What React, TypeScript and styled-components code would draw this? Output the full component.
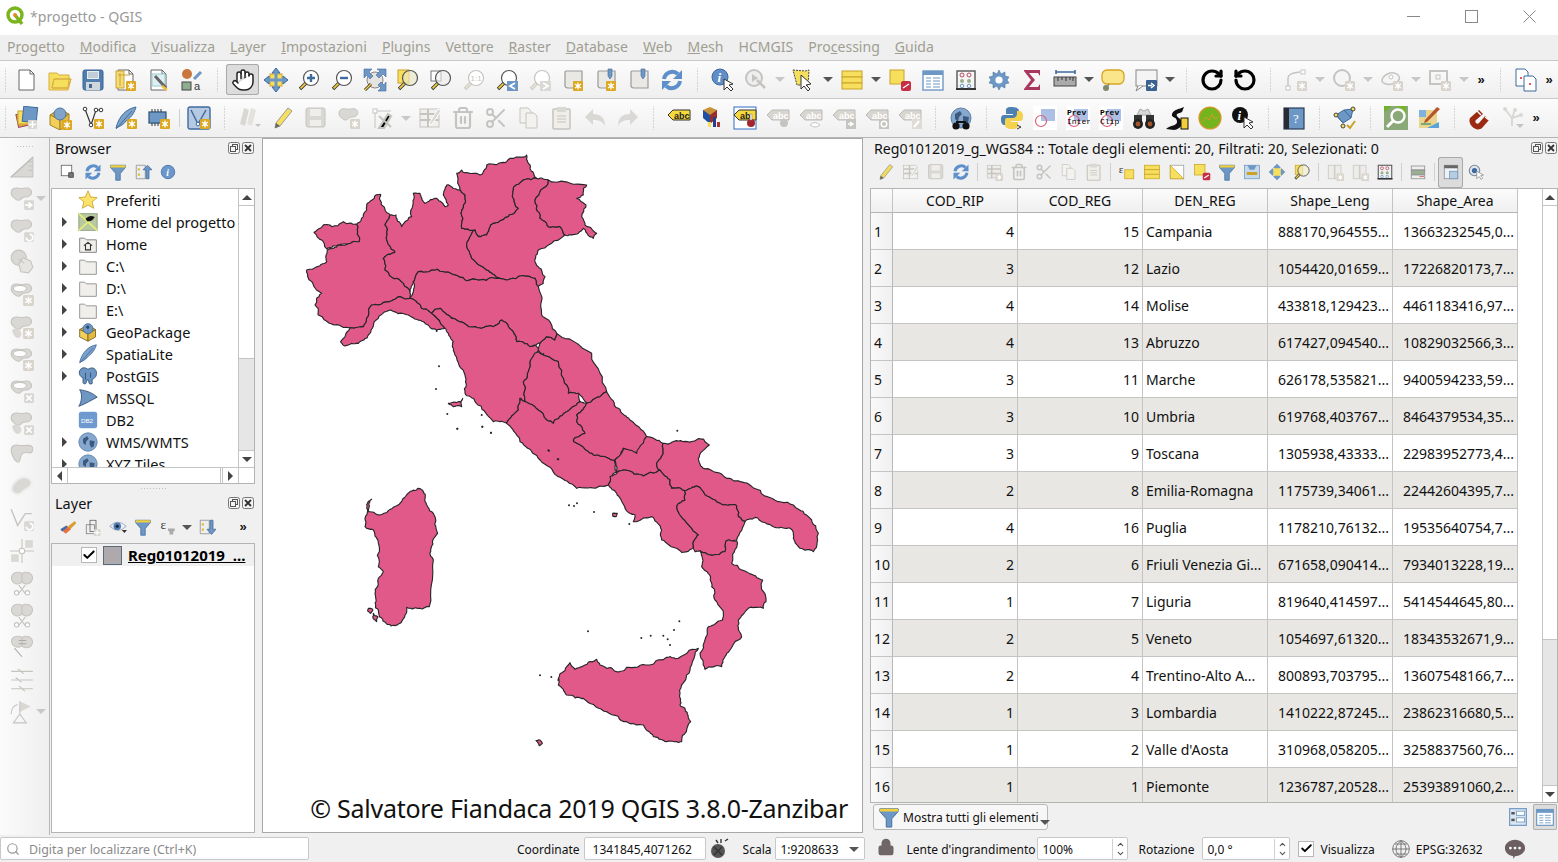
import React from "react";
import styled, { createGlobalStyle } from "styled-components";
import { Hand, RotateCcw, RotateCw, Scissors, Trash2, Search, Check, Lock, ChevronUp, ChevronDown } from "lucide-react";

const GlobalStyle = createGlobalStyle`
    html, body { margin: 0; padding: 0; height: 100%; overflow: hidden; }
    body { font-family: "Noto Sans", "Open Sans", sans-serif; font-size: 14px; color: #111; background: #f0f0f0; }
    #root { height: 100%; }
    * { box-sizing: border-box; }
`;

const B = "#6d97c4";
const BD = "#3f6a9e";
const Y = "#f7df5e";
const YD = "#c9a227";
const G = "#dad8d4";
const GD = "#c6c4c0";

const Gear = ({ x = 13, y = 13, dim = false }: { x?: number; y?: number; dim?: boolean }) => (
    <g transform={`translate(${x} ${y})`}>
        <rect width="10" height="10" rx="1" fill={dim ? "#d8d3cb" : "#dba81f"} />
        <path d="M5 1.5v7M2 3l6 4M8 3L2 7" stroke="#fff" strokeWidth="1.3" />
        <circle cx="5" cy="5" r="1.6" fill="#fff" />
    </g>
);
const Mark = ({ x = 14, y = 14, d }: { x?: number; y?: number; d: string }) => (
    <g transform={`translate(${x} ${y})`}>
        <rect width="9" height="9" rx="1" fill="#d8d6d2" />
        <path d={d} stroke="#fff" strokeWidth="1.6" fill="none" />
    </g>
);
const Lens = ({ fill = "#fff", stroke = "#555", dim = false }: { fill?: string; stroke?: string; dim?: boolean }) => (
    <>
        <path d="M9 15l-6 6" stroke={dim ? GD : "#333"} strokeWidth="3.4" />
        <path d="M8.6 15.4l-5 5" stroke={dim ? "#e8e4d0" : "#f0cc3a"} strokeWidth="1.8" />
        <circle cx="14" cy="10" r="7.5" fill={fill} stroke={stroke} strokeWidth="1.2" />
    </>
);
const Blob = ({ c = G }: { c?: string }) => (
    <path d="M2 7c0-3 3-5 7-4s6-1 9 0 4 5 1 7-5 0-7 2-3 3-6 1-4-3-4-6z" fill={c} stroke={GD} />
);
const Globe = ({ r = 10, c = 12 }: { r?: number; c?: number }) => (
    <>
        <circle cx={c} cy={c} r={r} fill="#86a8cf" stroke="#5c80aa" />
        <path d="M6 8l5-3 2 3-3 3-1 5-3-3zM14 10l6 1-1 6-3 2-2-4z" fill="#3d5a7d" />
    </>
);
const Doc = ({ c = "#666" }: { c?: string }) => (
    <>
        <path d="M4 2h11l4 4v16H4z" fill="#fff" stroke={c} />
        <path d="M15 2v4h4" fill="none" stroke={c} />
    </>
);
const Book = ({ c = "#999" }: { c?: string }) => (
    <path d="M5 3h16v17H7c-3 0-3-2-3-2V5c0-1 0-2 1-2z" fill="#e9e8e4" stroke={c} strokeWidth="1.2" />
);
const Pin = () => <path d="M14 1h4v7l-2 3-2-3z" fill={B} stroke={BD} strokeWidth=".6" />;
const LabelTag = ({ fill = "#d9d5cf", c = "#bbb", t = "abc" }: { fill?: string; c?: string; t?: string }) => (
    <>
        <path d="M1 9l5-5h17v10H6z" fill={fill} stroke={c} />
        <text x="7" y="12.5" fontSize="9" fontWeight="700" fontFamily="Liberation Sans" fill={c === "#bbb" ? "#fff" : "#222"}>{t}</text>
    </>
);
const Pencil = ({ c = Y }: { c?: string }) => (
    <>
        <path d="M17 2l4 3-12 15-5 2 1-5z" fill={c} stroke="#999" />
        <path d="M4 22l1-5 4 3z" fill="#666" />
    </>
);
const Prev = ({ a, b }: { a: string; b: string }) => (
    <>
        <rect width="24" height="24" fill="#fff" />
        <rect x="8" y="3" width="14" height="12" fill="#abc0e4" />
        <circle cx="8" cy="15" r="5.5" fill="none" stroke="#e0607a" strokeWidth="1.2" />
        <text x="1" y="9" fontSize="8" fontFamily="Liberation Mono" fontWeight="700">{a}</text>
        <text x="1" y="18" fontSize="8" fontFamily="Liberation Mono">{b}</text>
    </>
);

const icons: Record<string, React.ReactNode> = {
    new: <Doc />,
    open: <path d="M1 5h8l2 2h10v4H6l-2 9h16l1-9h2l-3 11H1z M4 20L6 11h17l-3 9z" fill={Y} stroke="#d9ae45" />,
    save: <><rect x="2" y="2" width="20" height="20" rx="2" fill="#4f7eaf" stroke="#3a6290" /><rect x="6" y="3" width="12" height="8" fill="#e9eef3" /><path d="M7 5h10M7 7h10M7 9h10" stroke="#9ab" /><rect x="5" y="14" width="14" height="8" fill="#cfd6dc" /><rect x="8" y="16" width="3" height="4" fill="#44688f" /></>,
    saveAs: <><Doc /><rect x="2" y="3" width="8" height="17" fill="#f5dc74" stroke="#caa43a" /><path d="M6 5v13M4 7h12" stroke="#caa43a" /><Gear x={12} y={13} /></>,
    wrench: <><Doc /><rect x="5" y="6" width="13" height="12" fill="#dff0f5" stroke="#9cc" /><path d="M8 8l11 12" stroke="#666" strokeWidth="3" /><path d="M15 18l5 4" stroke="#f0c040" strokeWidth="2.5" /></>,
    style: <><circle cx="7" cy="6" r="5" fill="#c9763c" /><path d="M14 11l7-7" stroke={B} strokeWidth="3" /><rect x="2" y="14" width="9" height="8" fill="#8fac8e" stroke="#444" /><text x="14" y="22" fontSize="11" fontFamily="Liberation Sans" fill="#333">a</text></>,
    hand: <Hand size={24} fill="#fff" color="#222" strokeWidth={1.5} />,
    pan: <><rect x="6" y="6" width="12" height="12" fill={Y} stroke={YD} /><path d="M12 0l4 5H8zM12 24l4-5H8zM0 12l5-4v8zM24 12l-5-4v8z" fill={B} stroke={BD} /><path d="M12 4v16M4 12h16" stroke={B} strokeWidth="3" /></>,
    zoomIn: <><Lens /><path d="M14 6v8M10 10h8" stroke={BD} strokeWidth="2.4" /></>,
    zoomOut: <><Lens /><path d="M10 10h8" stroke={BD} strokeWidth="2.4" /></>,
    zoomFull: <><circle cx="12" cy="12" r="8" fill="#e6e4e0" stroke="#888" /><path d="M1 1h8L6 4l4 4-3 3-3-4-3 3zM23 1v8l-3-3-4 4-3-3 4-4-3-2zM23 23h-8l3-3-3-3 3-3 3 3 2-3z" fill={B} stroke={BD} strokeWidth=".6" /><path d="M8 16l-6 6" stroke="#333" strokeWidth="3" /><path d="M8 16l-6 6" stroke="#f0cc3a" strokeWidth="1.5" /></>,
    zoomSel: <><rect x="2" y="2" width="11" height="13" fill={Y} stroke={YD} /><Lens fill="#ece7c5aa" /></>,
    zoomLayer: <><rect x="2" y="3" width="10" height="10" fill="#fff" stroke="#777" /><Lens fill="#ececec99" /></>,
    zoom11: <><Lens dim stroke={GD} /><text x="8.5" y="13" fontSize="8" fontFamily="Liberation Sans" fill={GD}>1:1</text></>,
    zoomLast: <><Lens /><rect x="12" y="13" width="11" height="10" fill={B} /><path d="M20 15l-5 3 5 3" stroke="#fff" strokeWidth="1.8" fill="none" /></>,
    zoomNext: <><Lens dim stroke={GD} /><rect x="12" y="13" width="11" height="10" fill={G} /><path d="M15 15l5 3-5 3" stroke="#fff" strokeWidth="1.8" fill="none" /></>,
    bookNew: <><Book /><Gear x={12} y={13} /></>,
    bookShow: <><Book /><Pin /><Gear x={12} y={13} /></>,
    bookmark: <><Book /><Pin /></>,
    refresh: <><path d="M4 11a8.500 8.500 0 0 1 14-5" stroke="#5d8fca" strokeWidth="4" fill="none" /><path d="M22 2v9h-9z" fill="#5d8fca" /><path d="M20 13a8.500 8.500 0 0 1-14 5" stroke="#5d8fca" strokeWidth="4" fill="none" /><path d="M2 22v-9h9z" fill="#5d8fca" /></>,
    identify: <><circle cx="9" cy="9" r="8" fill="#5f8fc6" stroke="#3f6a9e" /><text x="6.5" y="14" fontSize="13" fontWeight="700" fontStyle="italic" fontFamily="Liberation Serif" fill="#fff">i</text><path d="M13 11v11l3-3 4 4 2-2-4-4 4-1z" fill="#fff" stroke="#333" /></>,
    identifyDim: <><circle cx="10" cy="10" r="8" fill="#eee" stroke={GD} strokeWidth="2" /><path d="M8 6l6 4-6 4z" fill={GD} /><path d="M13 12l8 8" stroke={GD} strokeWidth="2.5" /></>,
    select: <><path d="M1 2l12 1 4-1-1 15H5z" fill={Y} stroke="#444" strokeDasharray="2 1" /><path d="M9 7v14l3-3 4 5 2-2-4-4 5-1z" fill="#fff" stroke="#333" /></>,
    table: <><rect x="2" y="3" width="20" height="6" fill={Y} stroke={YD} /><rect x="2" y="9" width="20" height="6" fill={Y} stroke={YD} /><rect x="2" y="15" width="20" height="6" fill={Y} stroke={YD} /></>,
    deselect: <><rect x="2" y="2" width="14" height="14" fill={Y} stroke={YD} /><rect x="13" y="13" width="10" height="10" rx="2" fill="#c52e44" /><path d="M15 20l6-4" stroke="#fff" strokeWidth="1.4" /></>,
    attr: <><rect x="2" y="3" width="20" height="19" fill="#fff" stroke={B} strokeWidth="1.4" /><rect x="2" y="3" width="20" height="4" fill={B} /><path d="M5 10h5M12 10h7M5 13h5M12 13h7M5 16h5M12 16h7M5 19h5M12 19h7" stroke={B} /></>,
    abacus: <><rect x="3" y="3" width="18" height="18" fill="none" stroke="#555" strokeWidth="1.4" /><path d="M2 21h20" stroke="#333" strokeWidth="2" /><circle cx="8" cy="7" r="2" fill="none" stroke="#b84a5c" /><circle cx="15" cy="7" r="2" fill="none" stroke="#b84a5c" /><circle cx="8" cy="13" r="2" fill="#9aae8c" /><circle cx="15" cy="13" r="2" fill="#9aae8c" /><circle cx="8" cy="18" r="1.8" fill="none" stroke={B} /><circle cx="15" cy="18" r="1.8" fill="none" stroke={B} /></>,
    cog: <><path d="M12 2l2 4 4-2 0 4 4 1-2 3 2 3-4 1 0 4-4-2-2 4-2-4-4 2 0-4-4-1 2-3-2-3 4-1 0-4 4 2z" fill={B} stroke={BD} strokeWidth=".5" /><circle cx="12" cy="12" r="3.6" fill="#fff" /></>,
    sigma: <path d="M4 2h16v6l-2-3H9l6 7-6 7h9l2-3v6H4v-1l7-9-7-9z" fill="#a8395d" />,
    ruler: <><path d="M3 4h19M3 2v4M22 2v4" stroke={BD} strokeWidth="1.6" /><rect x="1" y="9" width="22" height="9" fill="#aaa" stroke="#444" /><path d="M5 9v4M9 9v3M13 9v4M17 9v3M20 9v4" stroke="#333" /></>,
    bubble: <><rect x="1" y="2" width="22" height="14" rx="5" fill="#fbe58a" stroke="#d6a520" strokeWidth="1.3" /><path d="M8 16l-3 5" stroke="#777" strokeWidth="1.2" /><circle cx="5" cy="20" r="3" fill="#7f8a6c" /></>,
    annot: <><rect x="2" y="2" width="21" height="16" fill="#f4f4f4" stroke="#888" /><path d="M4 18l-2 5 7-5" fill="#f4f4f4" stroke="#888" /><rect x="12" y="12" width="11" height="11" rx="1" fill="#3a6290" /><path d="M14 17.5h4M17 15l3 2.5-3 2.5" stroke="#fff" strokeWidth="1.5" fill="none" /></>,
    redo: <RotateCw size={24} color="#000" strokeWidth={3.2} />,
    undo: <RotateCcw size={24} color="#000" strokeWidth={3.2} />,
    curveDim: <><path d="M4 22V10q0-5 12-6" stroke={GD} strokeWidth="1.4" fill="none" /><rect x="2" y="18" width="4" height="4" fill="#fff" stroke={GD} /><rect x="17" y="2" width="4" height="4" fill="#fff" stroke={GD} /><Gear dim /></>,
    ringDim: <><circle cx="10" cy="10" r="8" fill="#f5f5f5" stroke={GD} strokeWidth="2" /><Gear dim /></>,
    ellipseDim: <><path d="M2 13c0-5 7-9 12-8s7 5 4 8-9 4-12 3-4-2-4-3z" fill="none" stroke={GD} strokeWidth="1.5" /><circle cx="11" cy="9" r="2" fill="#fff" stroke={GD} /><Gear dim /></>,
    rectDim: <><rect x="2" y="3" width="17" height="13" fill="none" stroke={GD} strokeWidth="2" /><rect x="8" y="7" width="4" height="4" fill="none" stroke={GD} /><Gear dim /></>,
    docs: <><path d="M2 1h9l3 3v14H2z" fill="#fff" stroke={BD} /><path d="M10 8h9l3 3v12H10z" fill="#fff" stroke={BD} /><circle cx="7" cy="10" r="1" fill="#d22" /><circle cx="16" cy="16" r="1" fill="#d22" /></>,
    layersAdd: <><rect x="2" y="7" width="14" height="13" fill="#e7a93a" stroke="#946" transform="rotate(-12 9 13)" /><rect x="3" y="5" width="14" height="13" fill={Y} stroke={YD} /><rect x="8" y="1" width="14" height="15" fill={B} stroke={BD} transform="rotate(6 15 8)" /><Mark x={13} y={14} d="M4.5 1v7M1 4.5h7" /></>,
    gpkgAdd: <><path d="M2 9l9-6 10 5-9 6z" fill="#d8b24e" stroke="#a58222" /><path d="M2 9v10l10 5V14z" fill="#f1cf5a" stroke="#a58222" /><path d="M12 14v10l9-5V8z" fill="#e2ba3f" stroke="#a58222" /><circle cx="12" cy="8" r="6" fill="#7fa3c9" stroke="#4d76a3" /><Gear x={14} y={14} /></>,
    vertexAdd: <><path d="M4 3l6 16 5-15 5 0" fill="none" stroke="#333" strokeWidth="1.2" /><circle cx="4" cy="3" r="1.8" fill="#fff" stroke="#333" /><circle cx="15" cy="4" r="1.8" fill="#fff" stroke="#333" /><circle cx="20" cy="4" r="1.8" fill="#fff" stroke="#333" /><circle cx="10" cy="19" r="1.8" fill="#fff" stroke="#333" /><Gear /></>,
    featherAdd: <><path d="M22 1C12 3 5 10 2 22c5-2 8-4 11-8 5-3 8-9 9-13z" fill="#7da3cc" stroke="#3f6a9e" /><path d="M2 23L18 5" stroke="#3f6a9e" /><Gear /></>,
    chipAdd: <><rect x="2" y="6" width="17" height="11" fill={B} stroke="#35597f" strokeWidth="1.3" /><path d="M5 3v3M8 3v3M11 3v3M14 3v3M5 17v3M8 17v3M11 17v3M14 17v3" stroke="#333" /><Gear /></>,
    vBox: <><rect x="1" y="1" width="22" height="22" rx="2" fill="#b5cae2" stroke={BD} strokeWidth="1.4" /><path d="M4 4l7 14 8-14" fill="none" stroke={BD} strokeWidth="1.5" /><circle cx="11" cy="18" r="1.8" fill="#fff" stroke={BD} /><Gear /></>,
    pencilsDim: <><path d="M6 2l5 2-4 16-5-2z" fill={G} /><path d="M13 2l5 2-4 16-5-2z" fill="#e4e2df" /><path d="M17 18l3 3 3-3z" fill={GD} /></>,
    pencil: <Pencil />,
    saveDim: <><rect x="2" y="2" width="19" height="19" rx="2" fill={G} stroke={GD} /><rect x="6" y="3" width="11" height="7" fill="#f0eeea" /><rect x="6" y="14" width="11" height="6" fill="#f0eeea" /></>,
    polyAdd: <><Blob /><Gear dim /></>,
    toolsDim: <><rect x="3" y="3" width="4" height="4" fill="#fff" stroke={GD} /><path d="M7 5h14M5 7v15" stroke={GD} /><path d="M9 22l9-14 3 2-7 12zM9 10l12 11" stroke={GD} strokeWidth="2.2" /></>,
    tableEditDim: <><rect x="2" y="3" width="19" height="18" fill="#f2f0ec" stroke={GD} /><path d="M2 8h19M2 14h19M10 3v18" stroke={GD} strokeWidth="2" /><path d="M20 3l3 2-9 13-3 1 1-3z" fill={G} stroke="#fff" /></>,
    trash: <Trash2 size={24} color={GD} strokeWidth={2.2} />,
    scissors: <Scissors size={24} color={GD} strokeWidth={2} />,
    copyDim: <><path d="M3 2h8l3 3v12H3z" fill="#f4f2ee" stroke={GD} /><path d="M9 7h8l3 3v12H9z" fill="#f4f2ee" stroke={GD} /></>,
    pasteDim: <><rect x="3" y="3" width="17" height="20" rx="1" fill="#f0eee9" stroke={GD} strokeWidth="1.5" /><rect x="7" y="1" width="9" height="5" fill={G} /><path d="M7 10h9M7 13h9M7 16h9" stroke={GD} /></>,
    undoDim: <path d="M2 11l8-8v5c8 0 12 4 12 12-3-5-6-6-12-6v5z" fill={G} />,
    redoDim: <path d="M22 11l-8-8v5C6 8 2 12 2 20c3-5 6-6 12-6v5z" fill={G} />,
    abc: <LabelTag fill="#f5d93d" c="#333" />,
    diagram: <><path d="M10 1l7 3v8l-7-3-7 3V4z" fill="#c9923a" /><path d="M3 4l7 5v9l-7-6z" fill="#1f4fa0" /><path d="M17 4l-7 5v9l7-6z" fill="#9b2c2c" /><rect x="13" y="11" width="3" height="10" fill="#233f8f" /><rect x="8" y="16" width="3" height="5" fill={Y} /><rect x="17" y="16" width="3" height="5" fill="#a33" /></>,
    abPin: <><rect x="1" y="1" width="22" height="22" fill="#fff" stroke="#2f6fc4" /><LabelTag fill="#f5d93d" c="#333" t="ab" /><circle cx="18" cy="17" r="4" fill="#a5252e" /><rect x="17" y="8" width="2" height="6" fill="#eee" stroke="#888" strokeWidth=".5" /></>,
    abPinDim: <><LabelTag /><circle cx="18" cy="17" r="4" fill={GD} /></>,
    abEye: <><LabelTag /><path d="M11 19q5-5 10 0q-5 4-10 0z" fill="#fff" stroke={GD} /></>,
    abMove: <><LabelTag /><rect x="14" y="13" width="10" height="10" fill={GD} /><path d="M16 18h4M18 16l3 2-3 2" stroke="#fff" fill="none" strokeWidth="1.5" /></>,
    abRot: <><LabelTag /><rect x="14" y="13" width="10" height="10" fill={GD} /><circle cx="19" cy="18" r="2.8" stroke="#fff" fill="none" strokeWidth="1.4" /></>,
    abEdit: <><LabelTag /><rect x="14" y="13" width="10" height="10" fill="#dfdcd6" /><path d="M16 21l5-6" stroke="#fff" strokeWidth="2" /></>,
    globeBin: <><Globe r={10} c={12} /><circle cx="7" cy="20" r="3.6" fill="#111" /><circle cx="17" cy="20" r="3.6" fill="#111" /><path d="M7 16h10" stroke="#111" strokeWidth="2" /></>,
    python: <><path d="M12 1c-6 0-6 2-6 4v3h7v1H4c-3 0-3 3-3 5s1 5 3 5h3v-3c0-2 2-4 4-4h6c2 0 2-2 2-3V5c0-2-2-4-7-4z" fill="#4e80b2" /><path d="M12 23c6 0 6-2 6-4v-3h-7v-1h9c3 0 3-3 3-5s-1-5-3-5h-3v3c0 2-2 4-4 4H7c-2 0-2 2-2 3v4c0 2 2 4 7 4z" fill="#f4d14f" /><path d="M17 19l4 2-4 2" stroke="#333" fill="none" /></>,
    prevBlank: <Prev a="" b="" />,
    prevInter: <Prev a="Prev" b="Inter" />,
    prevClip: <Prev a="Prev" b="Clip" />,
    binoc: <><path d="M8 3l4 2 4-2 3 6H5z" fill="#d7d7d7" stroke="#aaa" /><rect x="2" y="9" width="8" height="8" fill="#333" /><rect x="14" y="9" width="8" height="8" fill="#333" /><circle cx="6" cy="18" r="5" fill="#222" /><circle cx="18" cy="18" r="5" fill="#222" /><circle cx="6" cy="18" r="2.4" fill="#a3562c" /><circle cx="18" cy="18" r="2.4" fill="#a3562c" /></>,
    road: <><path d="M1 23c4-4 12-3 11-8s-6-3-5-7 7-5 12-7l-2 5c-5 2-6 2-5 4s5 3 5 7-5 7-8 7z" fill="#111" /><rect x="16" y="12" width="7" height="11" fill="#f2ce3b" stroke="#111" /></>,
    greenC: <><circle cx="12" cy="12" r="11" fill="#74b51e" stroke="#d9952a" strokeWidth="1.2" /><path d="M4 16l4-5 3 3 3-6 3 5 3-2" fill="none" stroke="#d9952a" /></>,
    infoB: <><circle cx="9" cy="9" r="8" fill="#111" /><text x="6.5" y="14" fontSize="13" fontWeight="700" fontStyle="italic" fontFamily="Liberation Serif" fill="#fff">i</text><path d="M13 11v11l3-3 4 4 2-2-4-4 4-1z" fill="#fff" stroke="#333" /></>,
    help: <><rect x="2" y="2" width="20" height="21" fill={B} stroke="#2b3f58" strokeWidth="1.2" /><rect x="2" y="2" width="5" height="21" fill="#2a2a33" /><text x="11" y="17" fontSize="13" fontFamily="Liberation Serif" fill="#fff">?</text></>,
    graph: <><path d="M3 9l8-5 9-1-2 9-8 5z" fill={B} stroke={BD} /><path d="M3 9L10 17M11 4l7 8" stroke={BD} /><circle cx="3" cy="9" r="2" fill={Y} stroke="#444" /><circle cx="20" cy="3" r="2" fill={Y} stroke="#444" /><circle cx="10" cy="20" r="2" fill={Y} stroke="#444" /><path d="M14 19l3 3 5-7" stroke={YD} strokeWidth="2" fill="none" /></>,
    greenLens: <><rect x="0" y="0" width="24" height="24" fill="#8aa878" /><path d="M0 0h8L0 6z" fill="#6fb32a" /><path d="M22 0v10L12 0z" fill="#76b432" /><circle cx="14" cy="10" r="6.5" fill="#8aa878" stroke="#fff" strokeWidth="2.4" /><path d="M9 15l-6 6" stroke="#fff" strokeWidth="3" /></>,
    mapPen: <><path d="M2 4h18v18H2z" fill="#e9d58d" /><path d="M2 4h7v7H2z" fill="#7fb2dd" /><path d="M10 22l12-6v6z" fill="#5aa2da" /><path d="M8 14l12-13 3 2-13 13-3 1z" fill="#b5562c" /><path d="M4 18h10" stroke="#7a7" strokeWidth="2" /></>,
    magnet: <><path d="M2 12L11 4l4 4-7 6c-2 2 1 5 3 3l6-7 4 4-7 8c-6 5-15-4-12-10z" fill="#9c2a12" /><path d="M9 5l4 4M17 11l4 3" stroke="#fff" strokeWidth="1.4" /></>,
    treeDim: <><circle cx="4" cy="3" r="2" fill={G} /><circle cx="14" cy="4" r="2" fill={G} /><circle cx="20" cy="9" r="2" fill={G} /><path d="M4 3l7 9 3-8M11 12l9-3M11 12v8" stroke={G} strokeWidth="2" fill="none" /><path d="M15 18h8l-4 4z" fill={GD} /></>,
    measureDim: <><path d="M2 22L22 4v18z" fill={G} stroke={GD} /><path d="M2 22L22 4" stroke="#bbb" /><path d="M18 8h4M18 12h4M18 16h4" stroke={GD} /></>,
    blobArrow: <><Blob /><Mark d="M1 4.5h5M4 2l3 2.5L4 7" /></>,
    blobRot: <><Blob /><Mark d="M2 5a3 3 0 1 0 3-3" /></>,
    hexRot: <><circle cx="9" cy="8" r="7" fill={G} stroke={GD} /><path d="M13 8l7 3 2 6-4 5-7-1-2-7z" fill="#e6e4e0" stroke={GD} /><path d="M9 9l5 4" stroke={GD} /></>,
    blobGear: <><Blob /><ellipse cx="10" cy="7" rx="6" ry="3" fill="#fff" stroke={GD} /><Gear dim /></>,
    blob2Gear: <><Blob /><path d="M3 15c0-2 5-2 7 0s2 6-1 7-6-4-6-7z" fill={G} /><Gear dim /></>,
    blobX: <><Blob /><ellipse cx="10" cy="7" rx="6" ry="3" fill="#fff" stroke={GD} /><Mark d="M2 2l5 5M7 2l-5 5" /></>,
    blob2X: <><Blob /><path d="M3 15c0-2 5-2 7 0s2 6-1 7-6-4-6-7z" fill={G} /><Mark d="M2 2l5 5M7 2l-5 5" /></>,
    blobCurve: <path d="M2 7c0-3 3-5 7-4s10-1 12 1 1 7-3 6-6 0-7 3-1 7-4 5-5-8-5-11z" fill={G} stroke={GD} />,
    blobOut: <path d="M3 16c-3-5 6-14 12-13s7 5 5 8-6 3-8 6-7 2-9-1z" fill={G} stroke="#eee" strokeWidth="2" />,
    vertexRot: <><path d="M2 3l6 15 7-11h6" fill="none" stroke={GD} strokeWidth="1.3" /><Mark d="M2 5a3 3 0 1 0 3-3" /></>,
    splitNode: <><path d="M12 1v22M1 12h22" stroke={GD} /><rect x="15" y="2" width="7" height="7" fill={G} /><rect x="2" y="15" width="7" height="7" fill={G} /><circle cx="12" cy="12" r="2.5" fill="#fff" stroke={GD} /></>,
    split: <><path d="M12 3c-8-3-11 3-9 7s9 4 9-1V3zM12 3c8-3 11 3 9 7s-9 4-9-1V3z" fill={G} stroke={GD} /><path d="M9 14l7 9M15 14l-7 9" stroke={GD} /><circle cx="7" cy="21" r="2" fill="#fff" stroke={GD} /><circle cx="17" cy="21" r="2" fill="#fff" stroke={GD} /></>,
    merge: <><path d="M12 3C4 0 1 5 3 9s9 4 9 1zM12 3c8-3 11 3 9 7s-9 3-9 0z" fill={G} stroke={GD} /><path d="M9 6h7M9 9h7M5 13l7 8" stroke="#aaa" /></>,
    linesDim: <path d="M2 4h20M2 12h20M2 20h20M8 2c3 0 3 4 6 4M6 10c3 0 3 4 6 4M9 18c3 0 3 4 6 4" stroke={GD} fill="none" />,
    rotDim: <><path d="M10 2l10 5-10 5z" fill={G} /><path d="M10 2v12l-6 8h12l-6-8" fill="none" stroke={GD} /><path d="M2 14c0-5 2-8 6-9" stroke={GD} fill="none" /></>,
    addRect: <><rect x="3" y="3" width="14" height="14" fill="#fff" stroke="#555" /><rect x="13" y="13" width="6" height="6" fill="#777" stroke="#333" /></>,
    filter: <><path d="M2 3h20v3l-7 8v9h-6v-9L2 6z" fill={B} stroke={BD} /><rect x="2" y="3" width="20" height="3" fill="#f1cf3d" /></>,
    collapse: <><path d="M3 3h12v18H3z" fill="#eee" stroke="#888" /><path d="M5 7h3v3H5zM5 14h3v3H5z" fill="#e0c040" /><path d="M16 21V9h-4l6-6 6 6h-4v12z" fill={B} stroke={BD} /></>,
    info: <><circle cx="12" cy="12" r="9" fill="#6b97cc" stroke={BD} /><text x="9.5" y="17" fontSize="13" fontWeight="700" fontStyle="italic" fontFamily="Liberation Serif" fill="#fff">i</text></>,
    brush: <><path d="M12 11l9-7 2 3-8 8z" fill="#d8a030" /><path d="M2 15l8-5 6 5-7 6z" fill="#e6703f" /><path d="M2 15l8-5 1 3-7 5z" fill="#3b6fb2" /></>,
    addGroup: <><rect x="3" y="9" width="11" height="12" fill="#eee" stroke="#777" /><rect x="8" y="3" width="8" height="15" fill="none" stroke="#555" /><Mark x={13} y={15} d="M4.5 1v7M1 4.5h7" /></>,
    eye: <><path d="M1 11q11-11 22 0q-11 11-22 0z" fill="#e8eef4" stroke="#8a9aac" /><circle cx="11" cy="11" r="5" fill="#4a7ab0" /><circle cx="11" cy="11" r="2" fill="#123" /><path d="M17 16h7l-3.5 4z" fill="#333" /></>,
    epsilon: <><text x="2" y="15" fontSize="18" fontFamily="Liberation Serif" fill="#444">ε</text><path d="M12 14h9v3l-2 1v4h-5v-4l-2-1z" fill="#aaa" /></>,
    orderDown: <><path d="M3 3h12v18H3z" fill="#eee" stroke="#888" /><path d="M5 7h3v3H5zM5 14h3v3H5z" fill="#e0c040" /><path d="M16 3v12h-4l6 7 6-7h-4V3z" fill={B} stroke={BD} /></>,
    pencilS: <Pencil c="#f1d95a" />,
    tableDim: <><rect x="3" y="3" width="18" height="17" fill="#eeece8" stroke={GD} /><path d="M3 8h18M9 3v17M3 14h18" stroke={GD} strokeWidth="2" /><Gear dim x={14} y={14} /></>,
    expr: <><text x="1" y="13" fontSize="15" fontFamily="Liberation Serif" fill="#333">ε</text><rect x="9" y="9" width="12" height="12" fill={Y} stroke={YD} /></>,
    triSel: <><rect x="3" y="3" width="18" height="18" fill="#fff" stroke="#999" /><path d="M3 3v18h18z" fill={Y} stroke={YD} /></>,
    moveTop: <><rect x="2" y="3" width="20" height="18" fill="#c7d8e8" stroke={B} /><path d="M6 3h12l-3 6h-6z" fill={B} /><path d="M5 14h14" stroke={YD} strokeWidth="4" /></>,
    panSmall: <><path d="M12 1l5 5-5 5-5-5zM12 13l5 5-5 5-5-5zM1 12l5-5 5 5-5 5zM13 12l5-5 5 5-5 5z" fill={B} /><rect x="7" y="7" width="10" height="10" fill={Y} /></>,
    zoomSelS: <><rect x="3" y="3" width="10" height="12" fill={Y} stroke={YD} /><Lens fill="#f4f0cf99" /></>,
    colDim: <><rect x="3" y="3" width="8" height="18" fill="#eeece8" stroke={GD} /><rect x="12" y="3" width="8" height="18" fill="#eeece8" stroke={GD} /><Gear dim x={14} y={14} /></>,
    organize: <><rect x="3" y="4" width="18" height="5" fill="#eee" stroke="#888" /><rect x="3" y="10" width="18" height="5" fill="#9bb08e" stroke="#888" /><rect x="3" y="16" width="18" height="5" fill="#eee" stroke="#888" /><path d="M14 18h6" stroke="#c55" /></>,
    formView: <><rect x="2" y="2" width="20" height="20" fill="#dbe6f2" stroke={B} strokeWidth="1.4" /><rect x="4" y="6" width="4" height="3" fill="#555" /><rect x="4" y="14" width="4" height="3" fill="#555" /><rect x="10" y="5" width="10" height="5" fill="#fff" stroke={B} /><rect x="10" y="13" width="10" height="5" fill="#fff" stroke={B} /></>,
    dockTable: <><rect x="3" y="3" width="18" height="18" fill="#eef2f6" stroke="#888" /><rect x="3" y="3" width="18" height="4" fill="#666" /><rect x="10" y="11" width="11" height="10" fill="#b8cce0" stroke={B} /></>,
    zoomBlue: <><circle cx="10" cy="10" r="7" fill="#dfe6ee" stroke="#7a8a9a" strokeWidth="1.5" /><circle cx="10" cy="10" r="3.5" fill={BD} /><path d="M13 11v10l3-3 3 4 2-2-3-3 4-1z" fill="#fff" stroke="#888" /></>,
    star: <path d="M12 1l3.2 7.4 7.8.7-6 5.2 1.8 7.7L12 18l-6.800 4 1.800-7.700-6-5.200 7.800-.7z" fill="#fbe26a" stroke="#c6a030" />,
    projHome: <><rect x="1" y="2" width="22" height="20" fill="#b8c9a2" stroke="#8a9a78" /><path d="M1 2l22 20M1 22L12 12" stroke="#e8ef74" strokeWidth="2" /><path d="M9 8q5-5 11-2-3 6-9 5z" fill="#111" /></>,
    homeFolder: <><path d="M2 5h6l2 2h12v15H2z" fill="#f0efeb" stroke="#888" strokeWidth="1.2" /><path d="M7 14l5-4 5 4M9 13v6h6v-6" fill="none" stroke="#333" strokeWidth="1.3" /></>,
    folder: <path d="M2 5h6l2 2h12v15H2z" fill="#f0efeb" stroke="#999" strokeWidth="1.2" />,
    gpkg: <><path d="M2 9l9-5 10 5-9 5z" fill="#d8b24e" stroke="#7a5f1a" /><path d="M2 9v9l10 5v-9z" fill="#f1cf5a" stroke="#7a5f1a" /><path d="M12 14v9l9-5V9z" fill="#e2ba3f" stroke="#7a5f1a" /><circle cx="12" cy="8" r="6" fill="#6f96c2" stroke="#3f6a9e" /><path d="M9 6l3-2 2 2-2 3z" fill="#2b4a6e" /></>,
    feather: <><path d="M22 1C12 3 5 10 2 22c5-2 8-4 11-8 5-3 8-9 9-13z" fill="#7da3cc" stroke="#3f6a9e" /><path d="M2 23L18 5" stroke="#3f6a9e" /></>,
    pg: <><path d="M3 4c3-3 6-2 9 0 4-3 9-2 10 3s-2 8-5 9v5c-2 1-3 1-4-1v-3h-3v3c-1 2-3 2-4 0v-6C2 13 0 8 3 4z" fill="#6b96c4" stroke="#2c4a70" /><path d="M9 8v8M15 8v6" stroke="#2c4a70" /></>,
    mssql: <path d="M2 2c8 1 16 4 21 9-6 3-14 8-22 11 3-5 5-14 1-20z" fill="#6f97c4" stroke="#2c4a70" />,
    db2: <><rect x="1" y="2" width="22" height="20" rx="3" fill="#6f9ad0" /><text x="3.500" y="15" fontSize="7.500" fontFamily="Liberation Sans" fill="#fff">DB2</text></>,
    wms: <Globe r={11} c={12} />,
};

const Svg = styled.svg<{ $s: number }>`
    width: ${p => p.$s}px;
    height: ${p => p.$s}px;
    display: block;
    flex: none;
`;

const Icon = ({ k, s = 24 }: { k: string; s?: number }) => {
    if (k === "hand" || k === "redo" || k === "undo" || k === "trash" || k === "scissors") {
        return React.cloneElement(icons[k] as React.ReactElement<{ size: number }>, { size: s });
    }
    return (
        <Svg $s={s} viewBox="0 0 24 24">
            {icons[k]}
        </Svg>
    );
};

const Shell = styled.div`
    height: 862px;
    width: 1558px;
    display: flex;
    flex-direction: column;
    overflow: hidden;
`;

const TitleBar = styled.div`
    height: 35px;
    background: #fff;
    display: flex;
    align-items: center;
    padding: 0 0 3px 6px;
    flex: none;
`;
const TitleText = styled.span`
    margin-left: 6px;
    font-size: 14.2px;
    color: #9a9a9a;
`;
const WinControls = styled.div`
    margin-left: auto;
    display: flex;
    align-items: center;
    gap: 45px;
    padding-right: 22px;
`;
const MenuBar = styled.div`
    height: 25px;
    background: #efefef;
    display: flex;
    align-items: center;
    gap: 15px;
    padding: 0 0 2px 7px;
    flex: none;
    color: #a09e92;
    font-size: 14.05px;
    white-space: nowrap;
`;
const ToolRow = styled.div<{ $h: number }>`
    height: ${p => p.$h}px;
    display: flex;
    align-items: center;
    flex: none;
    background: linear-gradient(#fcfcfc, #efefef);
    border-top: 1px solid #c9c9c9;
`;
const Slot = styled.div<{ $active?: boolean; $w?: number }>`
    width: ${p => p.$w || 33}px;
    height: 31px;
    flex: none;
    display: flex;
    align-items: center;
    justify-content: center;
    border-radius: 3px;
    ${p => (p.$active ? "background:#dcdcdc; box-shadow: inset 0 0 0 1px #a9a9a9;" : "")}
`;
const Grip = styled.div<{ $w: number }>`
    width: ${p => p.$w}px;
    height: 24px;
    flex: none;
    background-image: radial-gradient(circle, #b4b4b4 0.8px, transparent 1px);
    background-size: 3px 3px;
    background-position: center;
    background-repeat: repeat-y;
`;
const Arrow = styled.div<{ $dim?: boolean; $w?: number }>`
    width: ${p => p.$w || 15}px;
    flex: none;
    display: flex;
    justify-content: center;
    &::before {
        content: "";
        border-left: 5px solid transparent;
        border-right: 5px solid transparent;
        border-top: 5px solid ${p => (p.$dim ? "#c8c8c8" : "#555")};
    }
`;
const ShowArrow = styled(Arrow)`
    margin: 11px 0 0 -2px;
`;
const More = styled.div<{ $w?: number }>`
    width: ${p => p.$w || 20}px;
    flex: none;
    text-align: center;
    font-size: 13px;
    font-weight: 700;
    font-family: "Liberation Sans", sans-serif;
    line-height: 14px;
    color: #111;
`;
const Sep = styled.div<{ $w: number }>`
    width: ${p => p.$w}px;
    height: 24px;
    flex: none;
    position: relative;
    &::after {
        content: "";
        position: absolute;
        left: 50%;
        top: 3px;
        bottom: 3px;
        border-left: 1px solid #cfcfcf;
    }
`;

const renderTools = (items: string[], w = 33) =>
    items.map((t, i) => {
        if (t === "|H") return <Grip key={i} $w={10} />;
        if (t === "|h") return <Grip key={i} $w={18} />;
        if (t === "|s") return <Sep key={i} $w={w === 33 ? 7 : 8} />;
        if (t === "|v") return <Arrow key={i} />;
        if (t === "|d") return <Arrow key={i} $dim />;
        if (t === "|v2") return <Arrow key={i} $w={14} />;
        if (t === "|m") return <More key={i}>»</More>;
        if (t === "|m2") return <More key={i} $w={14}>»</More>;
        const active = t.startsWith("*");
        const k = active ? t.slice(1) : t;
        return (
            <Slot key={i} $active={active} $w={w}>
                <Icon k={k} s={w === 33 ? 24 : 18} />
            </Slot>
        );
    });

const row1 = ["|H","new","open","save","saveAs","wrench","style","|h","*hand","pan","zoomIn","zoomOut","zoomFull","zoomSel","zoomLayer","zoom11","zoomLast","zoomNext","bookNew","bookShow","bookmark","refresh","|h","identify","identifyDim","|d","select","|v","table","|v","deselect","attr","abacus","cog","sigma","ruler","|v","bubble","annot","|v","|h","redo","undo","|h","curveDim","|d","ringDim","|d","ellipseDim","|d","rectDim","|d","|m","|h","docs","|m2"];
const row2 = ["|H","layersAdd","gpkgAdd","vertexAdd","featherAdd","chipAdd","|s","vBox","|h","pencilsDim","pencil","saveDim","polyAdd","toolsDim","|d","tableEditDim","trash","scissors","copyDim","pasteDim","undoDim","redoDim","|h","abc","diagram","abPin","abPinDim","abEye","abMove","abRot","abEdit","|h","globeBin","|h","python","prevBlank","prevInter","prevClip","binoc","road","greenC","infoB","|h","help","|h","graph","|h","greenLens","mapPen","|h","magnet","treeDim","|m2"];
const leftTools = ["measureDim","blobArrow","blobRot","hexRot","blobGear","blob2Gear","blobGear","blobX","blob2X","blobCurve","blobOut","vertexRot","splitNode","split","split","merge","linesDim","rotDim"];
const attrTools = ["pencilS","tableEditDim","saveDim","refresh","|s","tableDim","trash","scissors","copyDim","pasteDim","|s","expr","table","triSel","deselect","filter","moveTop","panSmall","zoomSelS","|s","colDim","colDim","abacus","|s","organize","|s","*dockTable","zoomBlue"];

const Main = styled.div`
    flex: 1;
    min-height: 0;
    display: flex;
    border-top: 1px solid #b5b5b5;
`;
const LeftBar = styled.div`
    width: 50px;
    flex: none;
    background: linear-gradient(90deg, #fbfbfb, #efefef);
    border-right: 1px solid #b9b9b9;
    display: flex;
    flex-direction: column;
    padding-top: 7px;
`;
const LeftGrip = styled.div`
    height: 3px;
    margin: 0 16px 2px 16px;
    flex: none;
    background-image: radial-gradient(circle, #c0c0c0 0.7px, transparent 1px);
    background-size: 3px 3px;
`;
const LeftSlot = styled.div`
    height: 32.1px;
    padding-left: 9px;
    display: flex;
    align-items: center;
    flex: none;
`;
const LeftDocks = styled.div`
    width: 206px;
    flex: none;
    display: flex;
    flex-direction: column;
    padding-left: 1px;
`;
const DockHead = styled.div`
    height: 20px;
    display: flex;
    align-items: center;
    padding: 0 2px 0 4px;
    justify-content: space-between;
    font-size: 14.5px;
    flex: none;
`;
const DockBtns = styled.div`
    display: flex;
    gap: 2px;
`;
const DockTools = styled.div`
    height: 30px;
    display: flex;
    align-items: center;
    padding: 0 0 2px 4px;
    flex: none;
`;
const TreeFrame = styled.div<{ $h: number }>`
    height: ${p => p.$h}px;
    width: 204px;
    flex: none;
    background: #fff;
    border: 1px solid #b4b4b4;
    display: grid;
    grid-template-columns: 1fr 16px;
    grid-template-rows: 1fr 16px;
    overflow: hidden;
`;
const LayerFrame = styled(TreeFrame)`
    display: block;
`;
const TreeRows = styled.div`
    overflow: hidden;
`;
const TreeRow = styled.div`
    height: 22px;
    display: flex;
    align-items: center;
    white-space: nowrap;
    font-size: 14.5px;
`;
const Expander = styled.span<{ $on: boolean }>`
    width: 26px;
    padding-left: 10px;
    flex: none;
    &::before {
        content: "";
        display: ${p => (p.$on ? "block" : "none")};
        border-top: 5px solid transparent;
        border-bottom: 5px solid transparent;
        border-left: 5px solid #444;
        width: 0;
    }
`;
const TreeIcon = styled.span`
    width: 28px;
    flex: none;
`;
const VScroll = styled.div<{ $thumb: number }>`
    display: flex;
    flex-direction: column;
    border-left: 1px solid #c4c4c4;
    background: #fff;
    height: 100%;
    & > i {
        height: ${p => p.$thumb}px;
        flex: none;
        display: block;
        border-bottom: 1px solid #c4c4c4;
    }
    & > b {
        flex: 1;
        background: #e6e6e6;
        display: block;
    }
`;
const ScrollBtn = styled.div`
    height: 17px;
    flex: none;
    display: flex;
    align-items: center;
    justify-content: center;
    background: #fff;
    border-bottom: 1px solid #c4c4c4;
    &:last-child {
        border-bottom: 0;
        border-top: 1px solid #c4c4c4;
    }
`;
const HScroll = styled.div`
    display: flex;
    align-items: center;
    border-top: 1px solid #c4c4c4;
    & > i {
        flex: 1;
        height: 100%;
        display: block;
        border-left: 1px solid #c4c4c4;
        border-right: 3px double #c4c4c4;
    }
`;
const Corner = styled.div`
    border-top: 1px solid #c4c4c4;
    border-left: 1px solid #c4c4c4;
`;
const Tri = styled.span<{ $dir: "up" | "down" | "left" | "right" }>`
    width: 0;
    height: 0;
    margin: 0 5px;
    flex: none;
    ${p =>
        p.$dir === "up"
            ? "border-left:5px solid transparent;border-right:5px solid transparent;border-bottom:5px solid #444;"
            : p.$dir === "down"
            ? "border-left:5px solid transparent;border-right:5px solid transparent;border-top:5px solid #444;"
            : p.$dir === "left"
            ? "border-top:5px solid transparent;border-bottom:5px solid transparent;border-right:5px solid #444;"
            : "border-top:5px solid transparent;border-bottom:5px solid transparent;border-left:5px solid #444;"}
`;
const DockSplit = styled.div`
    height: 9px;
    flex: none;
    background-image: radial-gradient(circle, #c0c0c0 0.7px, transparent 1px);
    background-size: 3px 3px;
    background-position: center;
    background-repeat: repeat-x;
    background-clip: content-box;
    padding: 2px 90px;
`;
const LayerRow = styled.div`
    height: 22px;
    background: #f0f0f0;
    display: flex;
    align-items: center;
    padding-left: 29px;
`;
const CheckBox = styled.span<{ $s?: number }>`
    width: ${p => p.$s || 16}px;
    height: ${p => p.$s || 16}px;
    border: 1px solid #b8b8b8;
    background: #fff;
    flex: none;
    display: flex;
    align-items: center;
    justify-content: center;
`;
const Swatch = styled.span`
    width: 19px;
    height: 19px;
    background: #ada9ac;
    border: 1px solid #5a6a78;
    margin-left: 6px;
    flex: none;
`;
const LayerName = styled.span`
    margin-left: 6px;
    font-weight: 700;
    font-size: 15px;
    text-decoration: underline;
    color: #000;
    white-space: pre;
`;
const MapBox = styled.div`
    width: 601px;
    height: 695px;
    margin-left: 6px;
    flex: none;
    background: #fff;
    border: 1px solid #a8a8a8;
    position: relative;
    overflow: hidden;
`;
const MapSvg = styled.svg`
    display: block;
    width: 599px;
    height: 693px;
`;
const MapCaption = styled.div`
    position: absolute;
    right: 14px;
    top: 653px;
    font-size: 25px;
    letter-spacing: -0.27px;
    line-height: 32px;
    white-space: nowrap;
    color: #111;
`;
const AttrDock = styled.div`
    width: 688px;
    margin-left: 7px;
    flex: none;
    display: flex;
    flex-direction: column;
`;
const AttrHead = styled.div`
    height: 20px;
    display: flex;
    align-items: center;
    justify-content: space-between;
    padding: 0 1px 0 4px;
    font-size: 14.2px;
    white-space: nowrap;
    flex: none;
`;
const AttrTools = styled.div`
    height: 30px;
    display: flex;
    align-items: center;
    padding: 0 0 2px 3px;
    flex: none;
    color: #000;
`;
const TableFrame = styled.div`
    height: 615px;
    flex: none;
    background: #fff;
    border: 1px solid #b4b4b4;
    display: flex;
    overflow: hidden;
`;
const DataGrid = styled.div`
    width: 647px;
    flex: none;
    display: grid;
    grid-template-columns: 22px repeat(5, 125px);
    grid-auto-rows: 37px;
    grid-template-rows: 24px;
    align-content: start;
`;
const HeadCell = styled.div`
    background: linear-gradient(#fbfbfb, #f0f0f0);
    border-right: 1px solid #c4c4c4;
    border-bottom: 1px solid #b4b4b4;
    display: flex;
    align-items: center;
    justify-content: center;
    font-size: 14px;
    white-space: nowrap;
`;
const RowHead = styled.div`
    background: linear-gradient(90deg, #f9f9f9, #f0f0f0);
    border-right: 1px solid #b8b8b8;
    border-bottom: 1px solid #c4c4c4;
    display: flex;
    align-items: center;
    padding-left: 3px;
    font-size: 14px;
`;
const Cell = styled.div<{ $even: boolean; $right?: boolean }>`
    background: ${p => (p.$even ? "#e8e7e3" : "#fff")};
    border-right: 1px solid #c4c4c4;
    border-bottom: 1px solid #c4c4c4;
    display: flex;
    align-items: center;
    justify-content: ${p => (p.$right ? "flex-end" : "flex-start")};
    padding: 0 3px;
    font-size: 14px;
    white-space: nowrap;
    overflow: hidden;
`;
const TableGap = styled.div`
    flex: 1;
`;
const TableScroll = styled.div`
    width: 15px;
    flex: none;
`;
const AttrFoot = styled.div`
    height: 30px;
    display: flex;
    align-items: center;
    justify-content: space-between;
    padding: 0 1px 2px 3px;
    flex: none;
`;
const ShowBtn = styled.div`
    width: 175px;
    height: 26px;
    border: 1px solid #b9b9b9;
    border-radius: 3px;
    background: #f7f7f7;
    display: flex;
    align-items: center;
    padding-left: 4px;
    font-size: 12px;
    gap: 3px;
    white-space: nowrap;
`;
const ViewBtns = styled.div`
    display: flex;
    gap: 3px;
    align-items: center;
`;
const ViewBtn = styled.div<{ $on?: boolean }>`
    width: 24px;
    height: 26px;
    display: flex;
    align-items: center;
    justify-content: center;
    border-radius: 2px;
    ${p => (p.$on ? "background:#dcdcdc; box-shadow: inset 0 0 0 1px #b0b0b0;" : "")}
`;
const StatusBar = styled.div`
    height: 27px;
    flex: none;
    background: #f0f0f0;
    display: flex;
    align-items: center;
    font-size: 12px;
    white-space: nowrap;
`;
const Locator = styled.div`
    width: 309px;
    height: 23px;
    flex: none;
    background: #fff;
    border: 1px solid #c8c8c8;
    border-radius: 2px;
    display: flex;
    align-items: center;
    padding: 1px 0 0 5px;
    gap: 9px;
    color: #8a8a8a;
    font-size: 12.4px;
`;
const StatusLabel = styled.span<{ $ml?: number }>`
    margin: 2px 0 0 ${p => p.$ml || 0}px;
    flex: none;
`;
const Field = styled.div<{ $w: number; $ml?: number }>`
    width: ${p => p.$w}px;
    margin-left: ${p => p.$ml || 0}px;
    height: 23px;
    flex: none;
    background: #fff;
    border: 1px solid #c8c8c8;
    border-radius: 2px;
    display: flex;
    align-items: center;
    padding: 1px 0 0 4px;
    justify-content: space-between;
    overflow: hidden;
`;
const CoordValue = styled.span`
    padding-left: 4px;
`;
const Stepper = styled.div`
    width: 15px;
    height: 100%;
    flex: none;
    border-left: 1px solid #d0d0d0;
    display: flex;
    flex-direction: column;
    align-items: center;
    justify-content: center;
    color: #555;
`;
const StatusIcon = styled.span<{ $ml: number }>`
    margin-left: ${p => p.$ml}px;
    flex: none;
    color: #6f6668;
`;

// outlines traced over the reference, in 3x crop coordinates
const north: string[] = [
    "72,262 100,240 125,245 160,230 200,238 208,290 170,297 145,300 110,312 95,285",
    "50,375 90,362 110,350 112,315 145,300 208,290 200,238 222,205 232,175 258,150 272,148 275,180 300,210 285,240 297,300 315,322 280,340 285,375 320,400 360,440 360,460 328,455 290,470 245,480 220,545 180,548 135,540 85,510 75,480 95,445 65,410",
    "360,460 385,475 395,490 425,505 465,550 440,555 400,530 355,510 300,495 265,520 235,570 205,595 165,603 152,590 180,550 220,545 245,480 290,470 328,455",
    "285,240 300,210 318,210 335,245 365,215 370,145 390,145 405,175 440,160 465,185 475,180 460,150 470,120 510,135 525,150 515,195 515,250 555,255 530,300 545,340 590,375 630,400 570,405 525,405 460,380 385,380 370,410 360,440 320,400 285,375 280,340 315,322 297,300",
    "500,85 515,75 570,90 590,60 650,50 710,30 720,70 740,100 700,105 670,130 670,160 685,190 655,215 610,235 590,270 565,275 555,255 515,250 515,195 525,150 510,135",
    "740,100 775,105 735,165 750,220 775,245 810,245 825,270 745,315 735,350 765,395 745,425 735,400 700,392 650,405 630,400 590,375 545,340 530,300 555,255 565,275 590,270 610,235 655,215 685,190 670,160 670,130 700,105",
    "775,105 890,120 880,150 860,160 888,180 875,215 885,240 920,265 910,280 880,250 865,265 825,270 810,245 775,245 750,220 735,165",
    "360,460 370,440 370,410 385,380 460,380 525,405 570,405 630,400 650,405 700,392 735,400 745,425 755,510 800,565 795,585 770,575 750,595 720,605 680,590 665,555 635,525 610,545 575,550 530,540 485,520 450,490 425,505 395,490 385,475",
    "425,505 450,490 485,520 530,540 575,550 610,545 635,525 665,555 680,590 720,605 735,600 750,615 720,650 715,680 700,710 705,770 690,760 685,795 650,835 610,830 555,770 525,745 525,690 495,630 490,590 465,550",
    "750,595 770,575 795,585 800,565 905,625 950,740 890,775 865,745 835,745 805,650 760,630 745,615",
    "745,620 760,630 805,650 835,745 865,745 870,770 830,800 790,835 770,825 745,795 705,770 700,710 715,680 720,650",
    "650,835 685,795 690,760 705,770 745,795 770,825 790,835 830,800 870,770 890,775 860,810 860,830 885,865 850,885 895,920 925,930 975,945 980,980 955,1020 925,1025 860,1030 805,995 750,945 690,890",
    "890,775 950,740 985,790 1020,825 1070,875 1040,925 1000,910 975,945 925,930 895,920 850,885 885,865 860,830 860,810",
    "475,775 510,770 518,760 515,785 490,785",
];
const south: string[] = [
    "890,50 938,70 940,100 920,130 930,150 880,168 820,150 800,160 795,120 820,85 860,100",
    "938,70 1000,65 1060,57 1078,75 1045,115 1060,145 1130,175 1200,195 1265,235 1330,255 1385,300 1405,340 1390,395 1345,380 1330,355 1320,325 1270,320 1215,292 1185,305 1165,290 1160,258 1130,255 1095,240 1065,225 1040,198 1005,212 965,205 960,180 930,150 920,130 940,100",
    "800,160 820,150 880,168 930,150 960,180 965,205 1005,212 1005,240 982,255 990,285 1045,345 1030,383 995,397 935,360 935,330 905,290 850,305 855,285 825,265 800,220 775,195 780,170",
    "1005,212 1040,198 1065,225 1095,240 1130,255 1160,258 1165,290 1185,305 1160,360 1130,362 1125,395 1080,405 1050,392 1035,395 1030,383 1045,345 990,285 982,255 1005,240",
    "1050,392 1080,405 1125,395 1130,362 1160,362 1145,430 1210,465 1238,480 1248,545 1240,565 1195,565 1165,600 1175,650 1130,700 1115,740 1065,748 1050,700 1072,625 1118,600 1120,575 1095,540 1085,490 1055,440",
    "625,775 660,728 675,748 705,735 740,718 770,745 800,755 830,742 900,735 950,712 985,715 1045,685 1020,750 990,820 990,855 1005,865 1022,905 995,965 950,965 910,950 880,915 830,905 770,875 700,835 650,825 625,795",
    "45,295 50,265 65,238 55,275 90,285 130,262 180,215 205,205 225,235 250,280 263,340 242,390 250,420 238,560 205,565 170,562 155,605 135,617 110,612 85,570 75,520 85,475 100,455 85,440 85,370 70,330 45,320",
    "55,565 68,568 62,580 53,573",
    "70,580 84,590 80,605 72,598",
    "558,962 570,960 577,970 568,977",
    "788,280 802,280 798,290 788,288",
];
const dotsN: number[][] = [[447,664],[438,732],[472,807],[502,851],[577,845],[603,863],[775,916],[803,943],[575,810],[760,627],[440,558]];
const dotsS: number[][] = [[322,26],[397,20],[423,38],[982,32],[657,256],[672,258],[681,250],[732,276],[838,312],[714,634],[874,654],[902,647],[940,647],[953,658],[960,675],[972,630],[988,604],[570,766],[604,771],[625,780],[597,92],[625,118]];

// wobble each edge so the straight traces read as borders; the offset only
// depends on the two end points, so neighbouring regions keep the same edge
const wobble = (points: string, depth = 3) => {
    let pts = points.split(" ").map(p => p.split(",").map(Number));
    for (let d = 0; d < depth; d++) {
        const next: number[][] = [];
        pts.forEach((a, i) => {
            const b = pts[(i + 1) % pts.length];
            const len = Math.hypot(a[0] - b[0], a[1] - b[1]);
            next.push(a);
            if (len < 6) return;
            const seed = Math.sin((a[0] + b[0]) * 12.9898 + (a[1] + b[1]) * 78.233) * 43758.5453;
            const seed2 = Math.sin((a[0] + b[0]) * 39.346 + (a[1] + b[1]) * 11.135) * 24634.6345;
            const amp = Math.min(len * 0.16, 5);
            next.push([
                (a[0] + b[0]) / 2 + (seed - Math.floor(seed) - 0.5) * 2 * amp,
                (a[1] + b[1]) / 2 + (seed2 - Math.floor(seed2) - 0.5) * 2 * amp,
            ]);
        });
        pts = next;
    }
    return pts.map(p => `${p[0].toFixed(1)},${p[1].toFixed(1)}`).join(" ");
};

const ItalyMap = () => (
    <MapSvg viewBox="263 139 599 693">
        <g transform="translate(290 145) scale(.33333)" fill="#e15989" stroke="#26262a" strokeWidth="3.4" strokeLinejoin="round">
            {north.map((p, i) => <polygon key={i} points={wobble(p)} />)}
            {dotsN.map(([x, y], i) => <circle key={i} cx={x} cy={y} r="3" fill="#26262a" stroke="none" />)}
        </g>
        <g transform="translate(350 420) scale(.33333)" fill="#e15989" stroke="#26262a" strokeWidth="3.4" strokeLinejoin="round">
            {south.map((p, i) => <polygon key={i} points={wobble(p)} />)}
            {dotsS.map(([x, y], i) => <circle key={i} cx={x} cy={y} r="3" fill="#26262a" stroke="none" />)}
        </g>
    </MapSvg>
);

const DockIcons = () => (
    <DockBtns>
        <svg width="12" height="12" viewBox="0 0 12 12"><rect x=".5" y=".5" width="11" height="11" rx="2" fill="#f4f4f4" stroke="#777" /><rect x="4.500" y="2.500" width="5" height="5" fill="none" stroke="#555" /><rect x="2.500" y="4.500" width="5" height="5" fill="#f4f4f4" stroke="#555" /></svg>
        <svg width="12" height="12" viewBox="0 0 12 12"><rect x=".5" y=".5" width="11" height="11" rx="2" fill="#f4f4f4" stroke="#777" /><path d="M3 3l6 6M9 3l-6 6" stroke="#333" strokeWidth="1.8" /></svg>
    </DockBtns>
);

const tree: [string, string, boolean][] = [
    ["star", "Preferiti", false],
    ["projHome", "Home del progetto", true],
    ["homeFolder", "Home", true],
    ["folder", "C:\\", true],
    ["folder", "D:\\", true],
    ["folder", "E:\\", true],
    ["gpkg", "GeoPackage", true],
    ["feather", "SpatiaLite", true],
    ["pg", "PostGIS", true],
    ["mssql", "MSSQL", false],
    ["db2", "DB2", false],
    ["wms", "WMS/WMTS", true],
    ["wms", "XYZ Tiles", true],
];

const rows: [number, number, string, string, string][] = [
    [4, 15, "Campania", "888170,964555...", "13663232545,0..."],
    [3, 12, "Lazio", "1054420,01659...", "17226820173,7..."],
    [4, 14, "Molise", "433818,129423...", "4461183416,97..."],
    [4, 13, "Abruzzo", "617427,094540...", "10829032566,3..."],
    [3, 11, "Marche", "626178,535821...", "9400594233,59..."],
    [3, 10, "Umbria", "619768,403767...", "8464379534,35..."],
    [3, 9, "Toscana", "1305938,43333...", "22983952773,4..."],
    [2, 8, "Emilia-Romagna", "1175739,34061...", "22442604395,7..."],
    [4, 16, "Puglia", "1178210,76132...", "19535640754,7..."],
    [2, 6, "Friuli Venezia Gi...", "671658,090414...", "7934013228,19..."],
    [1, 7, "Liguria", "819640,414597...", "5414544645,80..."],
    [2, 5, "Veneto", "1054697,61320...", "18343532671,9..."],
    [2, 4, "Trentino-Alto A...", "800893,703795...", "13607548166,7..."],
    [1, 3, "Lombardia", "1410222,87245...", "23862316680,5..."],
    [1, 2, "Valle d'Aosta", "310968,058205...", "3258837560,76..."],
    [1, 1, "Piemonte", "1236787,20528...", "25393891060,2..."],
];

const Menu = () => (
    <MenuBar>
        <span>P<u>r</u>ogetto</span>
        <span><u>M</u>odifica</span>
        <span><u>V</u>isualizza</span>
        <span><u>L</u>ayer</span>
        <span><u>I</u>mpostazioni</span>
        <span><u>P</u>lugins</span>
        <span>Vett<u>o</u>re</span>
        <span><u>R</u>aster</span>
        <span><u>D</u>atabase</span>
        <span><u>W</u>eb</span>
        <span><u>M</u>esh</span>
        <span>HCMGIS</span>
        <span>Pro<u>c</u>essing</span>
        <span><u>G</u>uida</span>
    </MenuBar>
);

export default function App() {
    return (
        <Shell>
            <GlobalStyle />
            <TitleBar>
                <svg width="18" height="20" viewBox="0 0 18 20">
                    <circle cx="9" cy="9" r="7" fill="none" stroke="#7ab51d" strokeWidth="3.4" />
                    <path d="M9 9l7 9" stroke="#7ab51d" strokeWidth="3.4" />
                    <circle cx="9" cy="9" r="2" fill="#e08a2a" />
                </svg>
                <TitleText>*progetto - QGIS</TitleText>
                <WinControls>
                    <svg width="13" height="13" viewBox="0 0 13 13"><path d="M0 6.500h13" stroke="#888" /></svg>
                    <svg width="13" height="13" viewBox="0 0 13 13"><rect x=".5" y=".5" width="12" height="12" fill="none" stroke="#888" /></svg>
                    <svg width="13" height="13" viewBox="0 0 13 13"><path d="M.5.5l12 12M12.500.5l-12 12" stroke="#888" /></svg>
                </WinControls>
            </TitleBar>
            <Menu />
            <ToolRow $h={38}>{renderTools(row1)}</ToolRow>
            <ToolRow $h={39}>{renderTools(row2)}</ToolRow>
            <Main>
                <LeftBar>
                    <LeftGrip />
                    {leftTools.map((k, i) => (
                        <LeftSlot key={i}>
                            <Icon k={k} s={26} />
                            {(k === "blobArrow" || k === "rotDim") && <Arrow $dim $w={12} />}
                        </LeftSlot>
                    ))}
                </LeftBar>
                <LeftDocks>
                    <DockHead>Browser<DockIcons /></DockHead>
                    <DockTools>{renderTools(["addRect", "refresh", "filter", "collapse", "info"], 25)}</DockTools>
                    <TreeFrame $h={296}>
                        <TreeRows>
                            {tree.map(([k, label, exp]) => (
                                <TreeRow key={label}>
                                    <Expander $on={exp} />
                                    <TreeIcon><Icon k={k} s={20} /></TreeIcon>
                                    {label}
                                </TreeRow>
                            ))}
                        </TreeRows>
                        <VScroll $thumb={153}>
                            <ScrollBtn><Tri $dir="up" /></ScrollBtn>
                            <i />
                            <b />
                            <ScrollBtn><Tri $dir="down" /></ScrollBtn>
                        </VScroll>
                        <HScroll>
                            <Tri $dir="left" />
                            <i />
                            <Tri $dir="right" />
                        </HScroll>
                        <Corner />
                    </TreeFrame>
                    <DockSplit />
                    <DockHead>Layer<DockIcons /></DockHead>
                    <DockTools>
                        {renderTools(["brush", "addGroup", "eye", "filter", "epsilon", "|v2", "orderDown"], 25)}
                        <More $w={48}>»</More>
                    </DockTools>
                    <LayerFrame $h={290}>
                        <LayerRow>
                            <CheckBox><Check size={14} strokeWidth={3.4} color="#000" /></CheckBox>
                            <Swatch />
                            <LayerName>{"Reg01012019  ..."}</LayerName>
                        </LayerRow>
                    </LayerFrame>
                </LeftDocks>
                <MapBox>
                    <ItalyMap />
                    <MapCaption>© Salvatore Fiandaca 2019 QGIS 3.8.0-Zanzibar</MapCaption>
                </MapBox>
                <AttrDock>
                    <AttrHead>
                        Reg01012019_g_WGS84 :: Totale degli elementi: 20, Filtrati: 20, Selezionati: 0
                        <DockIcons />
                    </AttrHead>
                    <AttrTools>{renderTools(attrTools, 25)}</AttrTools>
                    <TableFrame>
                        <DataGrid>
                            <HeadCell />
                            {["COD_RIP", "COD_REG", "DEN_REG", "Shape_Leng", "Shape_Area"].map(h => (
                                <HeadCell key={h}>{h}</HeadCell>
                            ))}
                            {rows.map((r, i) => (
                                <React.Fragment key={i}>
                                    <RowHead>{i + 1}</RowHead>
                                    <Cell $even={i % 2 === 1} $right>{r[0]}</Cell>
                                    <Cell $even={i % 2 === 1} $right>{r[1]}</Cell>
                                    <Cell $even={i % 2 === 1}>{r[2]}</Cell>
                                    <Cell $even={i % 2 === 1} $right>{r[3]}</Cell>
                                    <Cell $even={i % 2 === 1} $right>{r[4]}</Cell>
                                </React.Fragment>
                            ))}
                        </DataGrid>
                        <TableGap />
                        <TableScroll>
                            <VScroll $thumb={434}>
                                <ScrollBtn><Tri $dir="up" /></ScrollBtn>
                                <i />
                                <b />
                                <ScrollBtn><Tri $dir="down" /></ScrollBtn>
                            </VScroll>
                        </TableScroll>
                    </TableFrame>
                    <AttrFoot>
                        <ShowBtn>
                            <Icon k="filter" s={22} />
                            Mostra tutti gli elementi
                            <ShowArrow $w={10} />
                        </ShowBtn>
                        <ViewBtns>
                            <ViewBtn><Icon k="formView" s={20} /></ViewBtn>
                            <ViewBtn $on><Icon k="attr" s={20} /></ViewBtn>
                        </ViewBtns>
                    </AttrFoot>
                </AttrDock>
            </Main>
            <StatusBar>
                <Locator><Search size={14} color="#999" />Digita per localizzare (Ctrl+K)</Locator>
                <StatusLabel $ml={208}>Coordinate</StatusLabel>
                <Field $w={122} $ml={4}><CoordValue>1341845,4071262</CoordValue></Field>
                <StatusIcon $ml={1}><Svg $s={24} viewBox="0 0 24 24"><circle cx="11" cy="14" r="7" fill="#555" /><path d="M7 10l8 8M15 10l-8 8M18 4l3-2M9 3l2 3M14 2v4" stroke="#333" strokeWidth="1.4" /></Svg></StatusIcon>
                <StatusLabel $ml={12}>Scala</StatusLabel>
                <Field $w={90} $ml={4}>1:9208633<Arrow $w={20} /></Field>
                <StatusIcon $ml={12}><Lock size={18} fill="#6f6668" /></StatusIcon>
                <StatusLabel $ml={11}>Lente d'ingrandimento</StatusLabel>
                <Field $w={91} $ml={2}>100%<Stepper><ChevronUp size={9} strokeWidth={3} /><ChevronDown size={9} strokeWidth={3} /></Stepper></Field>
                <StatusLabel $ml={10}>Rotazione</StatusLabel>
                <Field $w={88} $ml={8}>0,0 °<Stepper><ChevronUp size={9} strokeWidth={3} /><ChevronDown size={9} strokeWidth={3} /></Stepper></Field>
                <StatusIcon $ml={8}><CheckBox><Check size={13} strokeWidth={3.4} color="#000" /></CheckBox></StatusIcon>
                <StatusLabel $ml={6}>Visualizza</StatusLabel>
                <StatusIcon $ml={16}><Svg $s={20} viewBox="0 0 24 24"><circle cx="12" cy="12" r="10" fill="none" stroke="#666" /><path d="M2 12h20M12 2v20M5 6h14M5 18h14M12 2c-8 6-8 14 0 20M12 2c8 6 8 14 0 20" stroke="#666" fill="none" /></Svg></StatusIcon>
                <StatusLabel $ml={5}>EPSG:32632</StatusLabel>
                <StatusIcon $ml={21}><Svg $s={22} viewBox="0 0 24 24"><path d="M12 2c6 0 11 4 11 9s-5 9-11 9l-2 3v-3C5 19 1 16 1 11s5-9 11-9z" fill="#6b5f62" /><circle cx="7" cy="11" r="1.5" fill="#fff" /><circle cx="12" cy="11" r="1.5" fill="#fff" /><circle cx="17" cy="11" r="1.5" fill="#fff" /></Svg></StatusIcon>
            </StatusBar>
        </Shell>
    );
}
